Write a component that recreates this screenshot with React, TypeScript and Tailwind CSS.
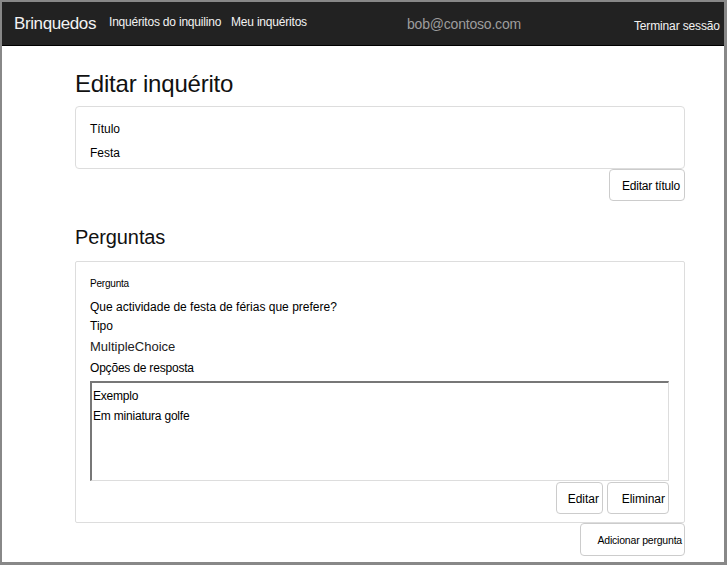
import React from "react";

export default function App() {
  return (
    <div className="w-[727px] h-[565px] overflow-hidden bg-white border-l-2 border-t-2 border-r-[3px] border-b-[3px] border-[#888888] font-['Liberation_Sans',Arial,sans-serif] text-black">
      {/* Nav */}
      <div className="h-[44px] bg-[#222222] border-b border-black flex items-center pl-[12px] text-[#f2f2f2]">
        <div className="w-[95px] text-[17px] leading-[20px] tracking-[-0.4px]">Brinquedos</div>
        <div className="w-[122px] text-[12px] leading-[16px] tracking-[-0.2px] -mt-[3px]">Inquéritos do inquilino</div>
        <div className="w-[176px] text-[12px] leading-[16px] tracking-[-0.2px] -mt-[3px]">Meu inquéritos</div>
        <div className="w-[227px] text-[14px] leading-[18px] text-[#9d9d9d] tracking-[-0.2px]">bob@contoso.com</div>
        <div className="text-[12px] leading-[16px] tracking-[-0.15px] mt-[4px]">Terminar sessão</div>
      </div>

      {/* Main */}
      <div className="ml-[73px] w-[610px] flex flex-col">
        <h1 className="mt-[26px] text-[24px] leading-[24px] text-[#111] tracking-[-0.2px]">Editar inquérito</h1>

        <div className="mt-[10px] h-[63px] border border-[#dddddd] rounded-[4px] px-[14px] pt-[12px] text-[12px]">
          <div className="leading-[20px]">Título</div>
          <div className="mt-[4px] leading-[20px]">Festa</div>
        </div>

        <div className="flex justify-end">
          <button className="w-[76px] h-[32px] border border-[#cccccc] rounded-[4px] bg-white text-right pr-[4px] pt-[2px] text-[12px] tracking-[-0.2px]">
            Editar título
          </button>
        </div>

        <h2 className="mt-[26px] text-[20px] leading-[20px] text-[#111] tracking-[-0.1px]">Perguntas</h2>

        <div className="mt-[14px] h-[262px] border border-[#dddddd] rounded-[2px] pl-[14px] pr-[15px] pt-[14px] flex flex-col">
          <div className="text-[10px] leading-[16px] tracking-[-0.2px]">Pergunta</div>
          <div className="mt-[6px] text-[12px] leading-[18px]">Que actividade de festa de férias que prefere?</div>
          <div className="mt-[1px] text-[12px] leading-[18px]">Tipo</div>
          <div className="mt-[2px] text-[13px] leading-[20px] text-[#222]">MultipleChoice</div>
          <div className="mt-[2px] text-[12px] leading-[18px] tracking-[-0.2px]">Opções de resposta</div>
          <div className="mt-[4px] h-[100px] border-t-2 border-l-2 border-t-[#777777] border-l-[#777777] border-r border-b border-r-[#dddddd] border-b-[#dddddd] pl-[1px] pt-[3px] text-[12px] leading-[20px] tracking-[-0.2px]">
            <div>Exemplo</div>
            <div>Em miniatura golfe</div>
          </div>
          <div className="mt-[1px] flex justify-end gap-[4px]">
            <button className="w-[47px] h-[32px] border border-[#cccccc] rounded-[4px] bg-white text-right pr-[3px] pt-[1px] text-[12px]">
              Editar
            </button>
            <button className="w-[62px] h-[32px] border border-[#cccccc] rounded-[4px] bg-white text-right pr-[3px] pt-[1px] text-[12px]">
              Eliminar
            </button>
          </div>
        </div>

        <div className="flex justify-end">
          <button className="w-[105px] h-[33px] border border-[#cccccc] rounded-[4px] bg-white text-right pr-[2px] pt-[2px] text-[10.5px] tracking-[-0.2px]">
            Adicionar pergunta
          </button>
        </div>
      </div>
    </div>
  );
}
